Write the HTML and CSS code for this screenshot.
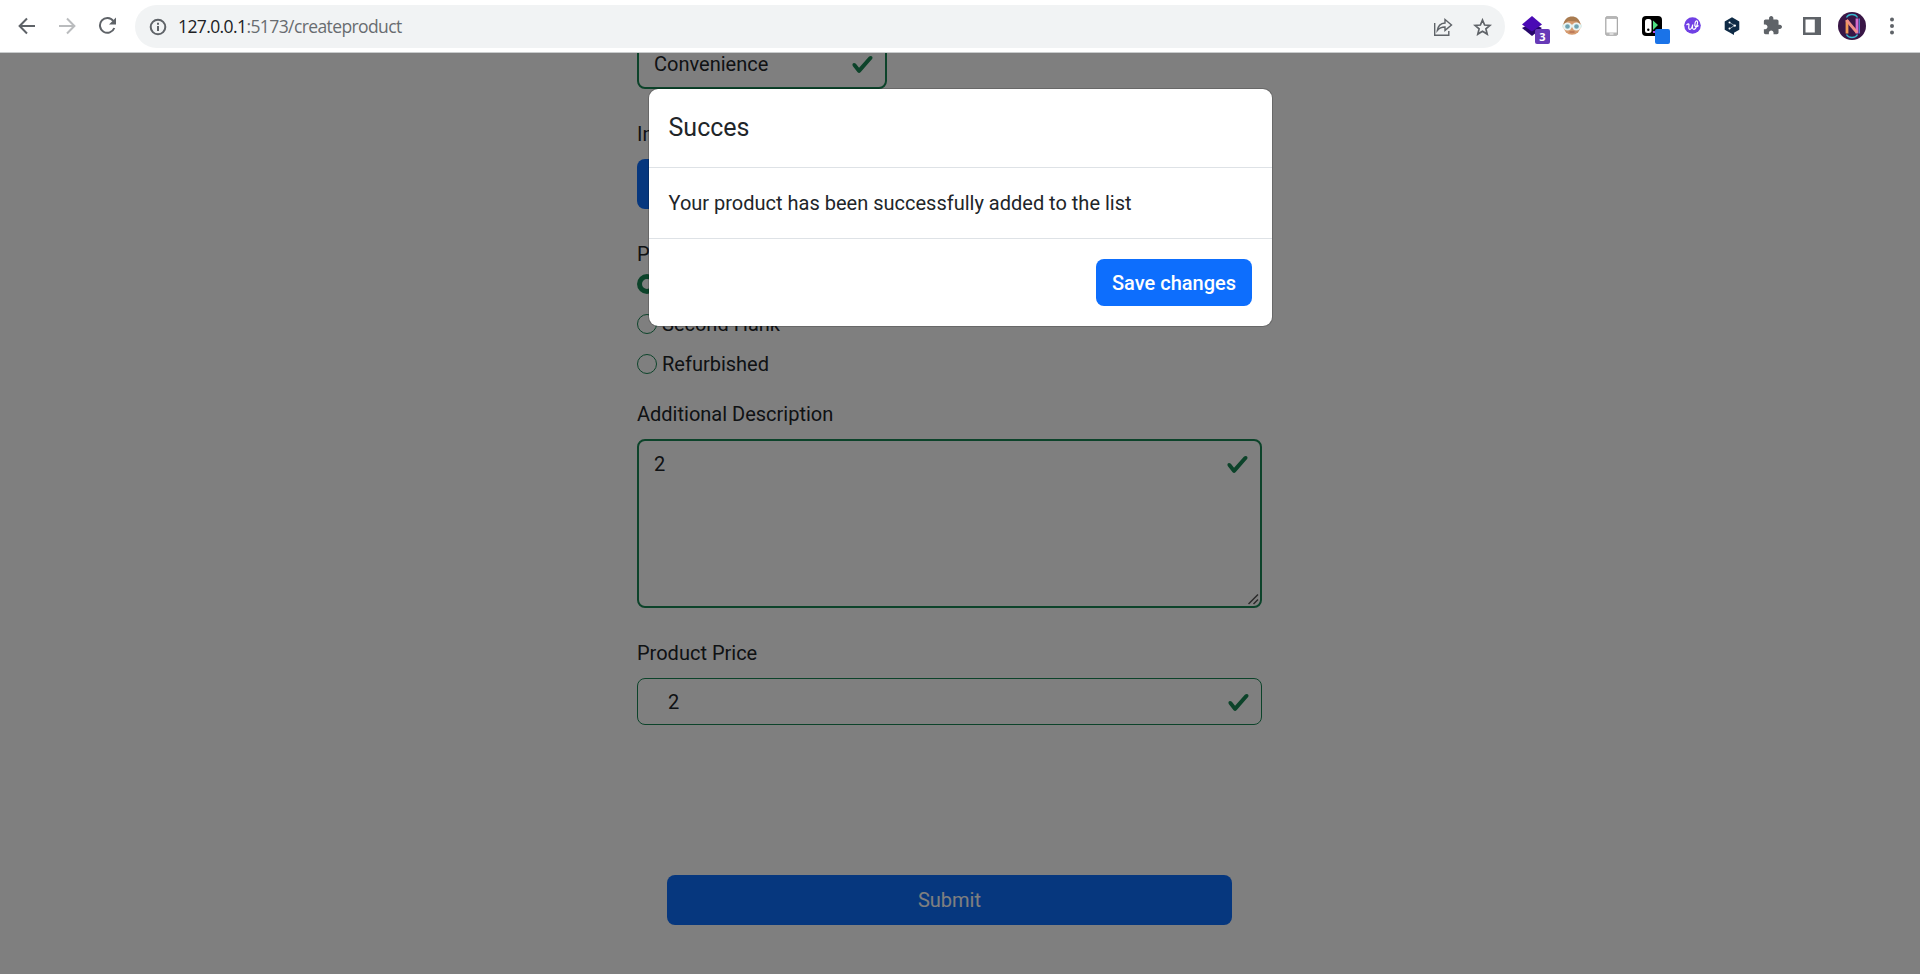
FILE: index.html
```html
<!DOCTYPE html>
<html lang="en">
<head>
<meta charset="utf-8">
<title>Create product</title>
<link rel="stylesheet" href="styles.css">
</head>
<body>
<header class="toolbar">
  <nav class="nav">
    <svg width="18" height="18" viewBox="0 0 18 18" fill="none" stroke="#5f6368" stroke-width="2"><path d="M17 9H2M9 1.5 1.6 9 9 16.500"/></svg>
    <svg width="18" height="18" viewBox="0 0 18 18" fill="none" stroke="#babcbe" stroke-width="2"><path d="M1 9h15M9 1.500 16.400 9 9 16.500"/></svg>
    <svg width="20" height="18" viewBox="0 0 20 18" fill="none" stroke="#5f6368" stroke-width="2"><path d="M15.300 4A7.400 7.400 0 1 0 16.300 11"/><path d="M18 .5V7.500H11z" fill="#5f6368" stroke="none"/></svg>
  </nav>
  <div class="omnibox">
    <svg width="18" height="18" viewBox="0 0 18 18" fill="none" stroke="#5f6368" stroke-width="2"><circle cx="9" cy="9" r="7.300"/><path d="M9 8v5M9 4.800v2"/></svg>
    <span class="url"><b>127.0.0.1</b>:5173/createproduct</span>
    <span class="omni-actions">
      <svg width="20" height="20" viewBox="0 0 20 20" fill="none" stroke="#5f6368" stroke-width="1.400"><path d="M1.700 6v12.200h14.100V14M4.300 13.500C5 8.500 8 6.300 12 6V2.500L18.500 8 12 13.400V10C8.500 10 6.200 11 4.300 13.500z"/></svg>
      <svg width="19" height="18" viewBox="0 0 19 18" fill="none" stroke="#5f6368" stroke-width="1.700"><path d="m9.500 2 2.100 5 5.400.4-4.100 3.500 1.300 5.200-4.700-2.800-4.700 2.800 1.300-5.200L2 7.400 7.400 7z"/></svg>
    </span>
  </div>
  <div class="extensions">
    <span class="ext ext-layers">
      <svg width="20" height="20" viewBox="0 0 20 20"><path d="m0 12 10-5 10 5-10 8z" fill="#27086b"/><path d="m10 0 10 8.500-10 7-10-7z" fill="#4a0ab5"/></svg>
      <i class="badge">3</i>
    </span>
    <span class="ext"><svg width="20" height="20" viewBox="0 0 20 20"><circle cx="10" cy="10" r="8.700" fill="#d59a6e"/><path d="M1.500 9C2 3 6 .500 10 .5s8 2.500 8.500 8.500L15 5.500 6 5z" fill="#a97b50"/><path d="M0 8.500h20v3H0z" fill="#dff0ef"/><circle cx="5.500" cy="10.500" r="3.200" fill="#6fa3b1" stroke="#e9f4f4" stroke-width="1.700"/><circle cx="14.500" cy="10.500" r="3.200" fill="#6fa3b1" stroke="#e9f4f4" stroke-width="1.700"/><path d="M7.500 16h5" stroke="#a85f49"/></svg></span>
    <span class="ext"><svg width="14" height="20" viewBox="0 0 14 20"><rect x=".7" y=".7" width="11.800" height="18.600" rx="1.200" fill="#b9b9b9" stroke="#aaa"/><path d="M1.500 3h10.200v13.500H1.500z" fill="#fff"/><path d="M4.500 18h4" stroke="#fff"/></svg></span>
    <span class="ext ext-switch">
      <svg width="20" height="20" viewBox="0 0 20 20"><rect width="20" height="20" rx="4" fill="#000"/><rect x="3" y="3" width="6.500" height="14" rx="2.500" fill="#fff"/><circle cx="6.300" cy="13.800" r="1.200"/><path d="M11 4.500 16 9l-5 5z" fill="#4fe082"/><path d="M11 15h4v2h-4z" fill="#b94ae0"/></svg>
      <i class="badge badge-blue"></i>
    </span>
    <span class="ext"><svg width="17" height="17" viewBox="0 0 17 17"><circle cx="8.500" cy="8.500" r="8.300" fill="#7040e4"/><path d="M2.500 8C4 6.500 5.300 6.200 4.900 8.500c-.4 2.500-.2 4 1.100 3.800C7.500 12 8.300 10 8.700 7.500 8.300 10.500 8.300 12.300 9.800 12.300c2.500 0 4.700-7.500 3.200-8.300-1.700-.8-3 4.500-1.500 5.500 1 .6 2 0 3-1" fill="none" stroke="#fff" stroke-width="1.200"/></svg></span>
    <span class="ext"><svg width="16" height="18" viewBox="0 0 16 18"><path d="m8 .300 7.300 4.200v8.300L10 15.700V18l-3.500-2-5.800-3.200V4.500z" fill="#0f2b46"/><path d="m5.500 5.500 5 3-5 3.300" fill="none" stroke="#b9c3cc" stroke-width=".8"/><circle cx="5.500" cy="5.500" r="1" fill="#fff"/><circle cx="10.800" cy="8.600" r="1.200" fill="#fff"/><circle cx="5.500" cy="11.500" r="1" fill="#fff"/></svg></span>
    <span class="ext"><svg width="19" height="19" viewBox="1 1 22 22"><path d="M20.500 11H19V7c0-1.100-.9-2-2-2h-4V3.500C13 2.120 11.880 1 10.500 1S8 2.120 8 3.500V5H4c-1.100 0-1.990.9-1.990 2v3.800H3.500c1.490 0 2.700 1.210 2.700 2.700s-1.210 2.700-2.700 2.700H2V20c0 1.100.9 2 2 2h3.800v-1.500c0-1.490 1.210-2.700 2.700-2.700s2.700 1.210 2.700 2.700V22H17c1.100 0 2-.9 2-2v-4h1.500c1.380 0 2.500-1.120 2.500-2.500S21.880 11 20.500 11z" fill="#5f6368"/></svg></span>
    <span class="ext"><svg width="18" height="18" viewBox="0 0 18 18"><path d="M0 0h18v18H0zM2.500 2.500v13h9.300v-13z" fill="#5f6368" fill-rule="evenodd"/></svg></span>
    <span class="ext"><svg width="28" height="28" viewBox="0 0 28 28"><circle cx="14" cy="14" r="14" fill="#391646"/><path d="M8.500 5.500c2-4 9-4 11 0M8.500 22.500c2 4 9 4 11 0" fill="none" stroke="#35b9cf" stroke-width="1.400"/><path d="M9 21.500V8" stroke="#f19a55" stroke-width="2.800"/><path d="M19 6.500v15" stroke="#d66bcd" stroke-width="2.800"/><path d="m8.500 8 10.500 12.500" stroke="#f08f86" stroke-width="2.800"/><path d="M21.300 6.500v15" stroke="#5b93e6"/></svg></span>
    <span class="ext"><svg width="6" height="18" viewBox="0 0 6 18" fill="#5f6368"><circle cx="3" cy="2.500" r="2"/><circle cx="3" cy="9" r="2"/><circle cx="3" cy="15.500" r="2"/></svg></span>
  </div>
</header>

<main class="page">
  <form class="form">
    <div class="control select">Convenience
      <svg class="check" viewBox="0 0 8 8"><path d="M2.300 6.730.6 4.530c-.4-1.040.46-1.400 1.100-.8l1.100 1.400 3.400-3.800c.6-.63 1.600-.27 1.200.7l-4 4.600c-.43.5-.8.4-1.100.1z"/></svg>
    </div>
    <div class="label gap-lg">Im</div>
    <div class="btn upload"></div>
    <div class="label gap-lg">P</div>
    <div class="radios">
      <div class="radio radio-first"><span class="dot dot-on"></span></div>
      <div class="radio"><span class="dot"></span>Second Hank</div>
      <div class="radio"><span class="dot"></span>Refurbished</div>
    </div>
    <div class="label gap-md">Additional Description</div>
    <div class="control area">2
      <svg class="check" viewBox="0 0 8 8"><path d="M2.300 6.730.6 4.530c-.4-1.040.46-1.400 1.100-.8l1.100 1.400 3.400-3.800c.6-.63 1.600-.27 1.200.7l-4 4.600c-.43.5-.8.4-1.100.1z"/></svg>
      <svg class="grip" width="11" height="11" viewBox="0 0 11 11" stroke="#555" stroke-width="1.500"><path d="m.5 10 9.500-9.500M5.500 10 10 5.500"/></svg>
    </div>
    <div class="label gap-lg">Product Price</div>
    <div class="control price">2
      <svg class="check" viewBox="0 0 8 8"><path d="M2.300 6.730.6 4.530c-.4-1.040.46-1.400 1.100-.8l1.100 1.400 3.400-3.800c.6-.63 1.600-.27 1.200.7l-4 4.600c-.43.5-.8.4-1.100.1z"/></svg>
    </div>
    <div class="btn submit">Submit</div>
  </form>

  <div class="backdrop">
    <section class="modal">
      <h1 class="modal-title">Succes</h1>
      <p class="modal-body">Your product has been successfully added to the list</p>
      <footer class="modal-footer"><button class="btn save" type="button">Save changes</button></footer>
    </section>
  </div>
</main>
</body>
</html>
```
FILE: styles.css
```css
* { box-sizing: border-box; }
body {
  margin: 0;
  height: 974px;
  overflow: hidden;
  display: flex;
  flex-direction: column;
  background: #fff;
  color: #212529;
  font: 20px/30px Roboto, "Liberation Sans", sans-serif;
}
svg { display: block; flex: none; }

.toolbar {
  display: flex;
  flex: none;
  height: 53px;
  padding-top: 5px;
  border-bottom: 1px solid #c9cccd;
}
.nav {
  display: flex;
  width: 135px;
  height: 42px;
  padding-left: 18px;
  gap: 22px;
  align-items: center;
}
.omnibox {
  display: flex;
  align-items: center;
  width: 1370px;
  height: 43px;
  padding: 0 13px 0 14px;
  border-radius: 22px;
  background: #f1f3f4;
}
.url {
  margin: 0 0 1px 11px;
  color: #686c70;
  font: 17.5px/24px "Open Sans", "Noto Sans", sans-serif;
  letter-spacing: -0.6px;
}
.url b { color: #202124; font-weight: 400; }
.omni-actions { display: flex; gap: 20px; margin-left: auto; align-items: center; }
.extensions {
  display: grid;
  grid-template-columns: repeat(10, 40px);
  height: 41px;
  margin-left: 7px;
  align-items: center;
}
.ext { position: relative; display: flex; justify-content: center; }
.badge {
  position: absolute;
  right: 2px;
  bottom: -8px;
  width: 15px;
  height: 15px;
  border-radius: 2px;
  background: #673ab7;
  color: #fff;
  font: 700 11px/15px "Open Sans", sans-serif;
  text-align: center;
}
.badge-blue { background: #1a73e8; }

.page { position: relative; flex: 1; overflow: hidden; }
.form { width: 625px; margin: -11px 0 0 637px; }
.control {
  position: relative;
  border: 2px solid #198754;
  border-radius: 8px;
}
.select { width: 250px; height: 47px; padding: 5px 15px; }
.area { height: 169px; margin-top: 10px; padding: 8px 15px; }
.price { height: 47px; margin-top: 10px; padding: 8px 30px; border-width: 1px; }
.check {
  position: absolute;
  top: 9px;
  right: 11px;
  width: 23px;
  height: 23px;
  fill: #198754;
}
.area .check { top: 12px; }
.price .check { top: 12px; }
.grip { position: absolute; right: 1px; bottom: 1px; }
.gap-lg { margin-top: 30px; }
.gap-md { margin-top: 20px; }
.btn {
  border: 0;
  border-radius: 8px;
  background: #0d6efd;
  color: #fff;
  text-align: center;
}
.upload { width: 240px; height: 50px; margin-top: 10px; }
.radios { display: grid; gap: 10px; }
.radio { display: flex; align-items: center; gap: 5px; }
.radio-first { height: 30px; }
.dot { width: 20px; height: 20px; border: 1px solid #198754; border-radius: 50%; }
.dot-on { border-width: 5.5px; }
.submit { height: 50px; margin: 150px 30px 0 30px; padding-top: 10px; }

.backdrop {
  position: absolute;
  inset: 0;
  padding: 35px 0 0 648px;
  background: rgba(0, 0, 0, .5);
}
.modal {
  width: 625px;
  border: 1px solid rgba(0, 0, 0, .175);
  border-radius: 10px;
  background: #fff;
  background-clip: padding-box;
}
.modal-title {
  height: 79px;
  margin: 0;
  padding: 20px 19.5px;
  border-bottom: 1px solid #dee2e6;
  font-size: 25px;
  font-weight: 400;
  line-height: 37.5px;
}
.modal-body { margin: 0; padding: 20px 19.5px; border-bottom: 1px solid #dee2e6; }
.modal-footer { display: flex; justify-content: flex-end; padding: 20px; }
.save { width: 156px; height: 47px; padding: 0; font: 500 20px/46px Roboto, sans-serif; white-space: nowrap; }
```
